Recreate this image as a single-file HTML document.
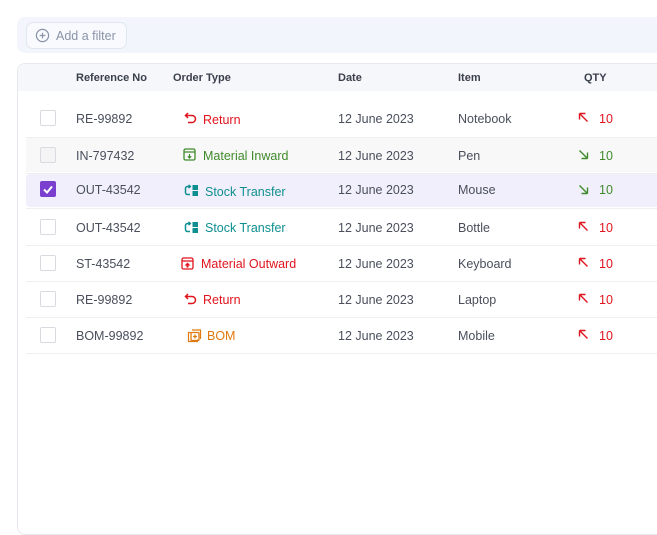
<!DOCTYPE html>
<html><head><style>
body{margin:0;width:657px;height:515px;background:#fff;font-family:"Liberation Sans",sans-serif;position:relative;overflow:hidden;color:#4a4f5c}
.a{position:absolute}
.fb{left:17px;top:17px;width:660px;height:36px;background:#f2f6fc;border-radius:8px}
.btn{left:26px;top:22px;width:99px;height:25px;border:1px solid #e1e6ef;border-radius:7px;background:#f8fafd;color:#8a93a8;font-size:12.5px}
.tbl{left:17px;top:63px;width:660px;height:470px;border:1px solid #e6e8ee;border-radius:8px}
.hd{left:18px;top:64px;width:660px;height:27px;background:#f6f7fb;border-radius:8px 0 0 0}
.h{font-size:11px;font-weight:bold;color:#3a3f4c;top:72px}
.row{left:26px;width:640px;height:35px}
.sep{left:26px;width:640px;height:1px;background:#eeeff2}
.cb{width:14px;height:14px;border:1px solid #d9dbe0;border-radius:2px;background:#fff}
.t{font-size:12.5px;margin-top:1px}
</style></head><body>
<div class="a fb"></div>
<div class="a btn"><svg class="a" style="left:8px;top:5px" width="15" height="15" viewBox="0 0 16 16"><circle cx="8" cy="8" r="6.5" fill="none" stroke="#8a93a8" stroke-width="1.3"/><path d="M8 5v6M5 8h6" stroke="#8a93a8" stroke-width="1.3"/></svg><span class="a" style="left:29px;top:6px">Add a filter</span></div>
<div class="a tbl"></div>
<div class="a hd"></div>
<div class="a h" style="left:76px">Reference No</div>
<div class="a h" style="left:173px">Order Type</div>
<div class="a h" style="left:338px">Date</div>
<div class="a h" style="left:458px">Item</div>
<div class="a h" style="left:584px">QTY</div>

<div class="a row" style="top:138px;background:#f8f8f9;height:34px"></div>
<div class="a row" style="top:174px;background:#f1effc;height:33px;border-radius:4px"></div>
<div class="a sep" style="top:137px"></div><div class="a sep" style="top:173px"></div><div class="a sep" style="top:208px"></div><div class="a sep" style="top:245px"></div><div class="a sep" style="top:281px"></div><div class="a sep" style="top:317px"></div><div class="a sep" style="top:353px"></div>

<div class="a cb" style="left:40px;top:110px"></div>
<div class="a cb" style="left:40px;top:147px;background:#f4f4f5"></div>
<div class="a" style="left:40px;top:181px;width:16px;height:16px;background:#7b3fd0;border-radius:2px"><svg width="16" height="16"><path d="M4 8.5l3 3 5-6" fill="none" stroke="#fff" stroke-width="2"/></svg></div>
<div class="a cb" style="left:40px;top:219px"></div>
<div class="a cb" style="left:40px;top:255px"></div>
<div class="a cb" style="left:40px;top:291px"></div>
<div class="a cb" style="left:40px;top:327px"></div>

<div class="a t" style="left:76px;top:111px">RE-99892</div>
<div class="a t" style="left:76px;top:148px">IN-797432</div>
<div class="a t" style="left:76px;top:182px">OUT-43542</div>
<div class="a t" style="left:76px;top:220px">OUT-43542</div>
<div class="a t" style="left:76px;top:256px">ST-43542</div>
<div class="a t" style="left:76px;top:292px">RE-99892</div>
<div class="a t" style="left:76px;top:328px">BOM-99892</div>

<svg class="a" style="left:184px;top:112px" width="13" height="13" viewBox="0 0 13 13"><path d="M4 1L1.5 3.5 4 6M1.5 3.5H8a3.5 3.5 0 010 7H4" fill="none" stroke="#e0141e" stroke-width="1.5"/></svg>
<div class="a t" style="left:203px;top:112px;color:#e0141e">Return</div>
<svg class="a" style="left:183px;top:148px" width="13" height="13" viewBox="0 0 13 13"><rect x="1" y="1" width="11" height="11" rx="1.5" fill="none" stroke="#3f8a2a" stroke-width="1.3"/><path d="M1 4h11M6.5 6v4M4.8 8.3l1.7 1.7 1.7-1.7" fill="none" stroke="#3f8a2a" stroke-width="1.2"/></svg>
<div class="a t" style="left:203px;top:148px;color:#3f8a2a">Material Inward</div>
<svg class="a" style="left:184px;top:184px" width="15" height="13" viewBox="0 0 15 13"><path d="M6 2.5H3.5a2 2 0 00-2 2v4a2 2 0 002 2H6M4.5 1l1.8 1.5-1.8 1.5" fill="none" stroke="#0f8f8f" stroke-width="1.5"/><rect x="8.5" y="1" width="5.5" height="5" fill="#0f8f8f"/><rect x="8.5" y="7" width="5.5" height="5" fill="#0f8f8f"/></svg>
<div class="a t" style="left:205px;top:184px;color:#0f8f8f">Stock Transfer</div>
<svg class="a" style="left:184px;top:221px" width="15" height="13" viewBox="0 0 15 13"><path d="M6 2.5H3.5a2 2 0 00-2 2v4a2 2 0 002 2H6M4.5 1l1.8 1.5-1.8 1.5" fill="none" stroke="#0f8f8f" stroke-width="1.5"/><rect x="8.5" y="1" width="5.5" height="5" fill="#0f8f8f"/><rect x="8.5" y="7" width="5.5" height="5" fill="#0f8f8f"/></svg>
<div class="a t" style="left:205px;top:220px;color:#0f8f8f">Stock Transfer</div>
<svg class="a" style="left:181px;top:257px" width="13" height="13" viewBox="0 0 13 13"><rect x="1" y="1" width="11" height="11" rx="1.5" fill="none" stroke="#e0141e" stroke-width="1.3"/><path d="M1 4h11" stroke="#e0141e" stroke-width="1.3"/><path d="M6.5 5.5l-3 3h2v2h2v-2h2z" fill="#e0141e"/></svg>
<div class="a t" style="left:201px;top:256px;color:#e0141e">Material Outward</div>
<svg class="a" style="left:184px;top:293px" width="13" height="13" viewBox="0 0 13 13"><path d="M4 1L1.5 3.5 4 6M1.5 3.5H8a3.5 3.5 0 010 7H4" fill="none" stroke="#e0141e" stroke-width="1.5"/></svg>
<div class="a t" style="left:203px;top:292px;color:#e0141e">Return</div>
<svg class="a" style="left:187px;top:329px" width="15" height="14" viewBox="0 0 15 14"><path d="M3.5 3.5h-2v9h9v-2M5 1h8.5v9" fill="none" stroke="#e07a10" stroke-width="1.2"/><rect x="4" y="3.5" width="8" height="8" rx="1" fill="none" stroke="#e07a10" stroke-width="1.3"/><path d="M8 5.5v4M6 7.5h4" stroke="#e07a10" stroke-width="1.3"/></svg>
<div class="a t" style="left:207px;top:328px;color:#e07a10">BOM</div>

<div class="a t" style="left:338px;top:111px">12 June 2023</div>
<div class="a t" style="left:338px;top:148px">12 June 2023</div>
<div class="a t" style="left:338px;top:182px">12 June 2023</div>
<div class="a t" style="left:338px;top:220px">12 June 2023</div>
<div class="a t" style="left:338px;top:256px">12 June 2023</div>
<div class="a t" style="left:338px;top:292px">12 June 2023</div>
<div class="a t" style="left:338px;top:328px">12 June 2023</div>

<div class="a t" style="left:458px;top:111px">Notebook</div>
<div class="a t" style="left:458px;top:148px">Pen</div>
<div class="a t" style="left:458px;top:182px">Mouse</div>
<div class="a t" style="left:458px;top:220px">Bottle</div>
<div class="a t" style="left:458px;top:256px">Keyboard</div>
<div class="a t" style="left:458px;top:292px">Laptop</div>
<div class="a t" style="left:458px;top:328px">Mobile</div>

<svg class="a" style="left:578px;top:112px" width="11" height="11"><path d="M1.5 1.5l8 8M1.5 1.5v6M1.5 1.5h6" fill="none" stroke="#e0141e" stroke-width="1.4"/></svg><div class="a t" style="left:599px;top:111px;color:#e0141e">10</div>
<svg class="a" style="left:578px;top:149px" width="11" height="11"><path d="M1.5 1.5l8 8M9.5 3.5v6M3.5 9.5h6" fill="none" stroke="#3f8a2a" stroke-width="1.4"/></svg><div class="a t" style="left:599px;top:148px;color:#3f8a2a">10</div>
<svg class="a" style="left:578px;top:184px" width="11" height="11"><path d="M1.5 1.5l8 8M9.5 3.5v6M3.5 9.5h6" fill="none" stroke="#3f8a2a" stroke-width="1.4"/></svg><div class="a t" style="left:599px;top:182px;color:#3f8a2a">10</div>
<svg class="a" style="left:578px;top:221px" width="11" height="11"><path d="M1.5 1.5l8 8M1.5 1.5v6M1.5 1.5h6" fill="none" stroke="#e0141e" stroke-width="1.4"/></svg><div class="a t" style="left:599px;top:220px;color:#e0141e">10</div>
<svg class="a" style="left:578px;top:257px" width="11" height="11"><path d="M1.5 1.5l8 8M1.5 1.5v6M1.5 1.5h6" fill="none" stroke="#e0141e" stroke-width="1.4"/></svg><div class="a t" style="left:599px;top:256px;color:#e0141e">10</div>
<svg class="a" style="left:578px;top:293px" width="11" height="11"><path d="M1.5 1.5l8 8M1.5 1.5v6M1.5 1.5h6" fill="none" stroke="#e0141e" stroke-width="1.4"/></svg><div class="a t" style="left:599px;top:292px;color:#e0141e">10</div>
<svg class="a" style="left:578px;top:329px" width="11" height="11"><path d="M1.5 1.5l8 8M1.5 1.5v6M1.5 1.5h6" fill="none" stroke="#e0141e" stroke-width="1.4"/></svg><div class="a t" style="left:599px;top:328px;color:#e0141e">10</div>
</body></html>
